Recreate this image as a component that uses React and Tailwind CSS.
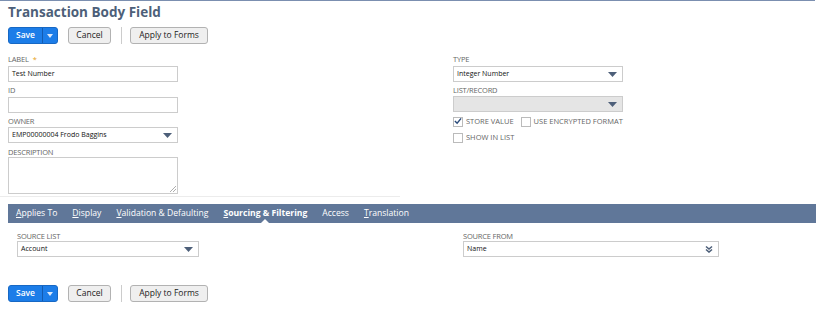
import React from "react";

const font = { fontFamily: '"Open Sans", "Liberation Sans", sans-serif' };

function Caret({ double }) {
  if (double) {
    return (
      <svg width="8" height="8" viewBox="0 0 8 8" className="text-[#4d5f79]">
        <path d="M1 1.5 L4 4 L7 1.5" stroke="currentColor" strokeWidth="1.6" fill="none" />
        <path d="M1 4.5 L4 7 L7 4.5" stroke="currentColor" strokeWidth="1.6" fill="none" />
      </svg>
    );
  }
  return (
    <svg width="9" height="5" viewBox="0 0 9 5" className="text-[#4d5f79]">
      <path d="M0 0 H9 L4.5 5 Z" fill="currentColor" />
    </svg>
  );
}

function Label({ children, req }) {
  return (
    <div className="h-[9px] text-[7.5px] leading-[9px] uppercase text-[#666] tracking-tight">
      {children}
      {req && <span className="ml-1 text-[#e6a118]">*</span>}
    </div>
  );
}

function TextBox({ value, w = "w-[170px]" }) {
  return (
    <div className={`${w} h-[16px] border border-[#ccc] bg-white px-[3px] text-[7px] leading-[14px] text-[#111]`}>
      {value}
    </div>
  );
}

function Select({ value, w = "w-[170px]", disabled, double }) {
  return (
    <div
      className={`${w} h-[16px] border border-[#ccc] ${disabled ? "bg-[#e5e5e5]" : "bg-white"} px-[3px] flex items-center justify-between text-[7px] text-[#111]`}
    >
      <span>{value}</span>
      <span className="pr-[2px] flex items-center">
        <Caret double={double} />
      </span>
    </div>
  );
}

function Buttons() {
  return (
    <div className="flex items-center h-[17px]">
      <div className="flex h-[17px] rounded-[3px] bg-[#1c7de8] border border-[#1768c4] text-white text-[8.5px]">
        <div className="w-[33px] flex items-center justify-center font-semibold">Save</div>
        <div className="w-[15px] border-l border-[#145bb0] flex items-center justify-center">
          <svg width="6" height="4" viewBox="0 0 6 4"><path d="M0 0H6L3 4Z" fill="#dbe9fb" /></svg>
        </div>
      </div>
      <div className="ml-[10px] h-[17px] w-[43px] rounded-[3px] border border-[#b2b2b2] bg-[#efefef] text-[8.5px] text-[#222] flex items-center justify-center">
        Cancel
      </div>
      <div className="ml-[10px] mr-[8px] w-px h-[17px] bg-[#ccc]" />
      <div className="h-[17px] w-[78px] rounded-[3px] border border-[#b2b2b2] bg-[#efefef] text-[8.5px] text-[#222] flex items-center justify-center">
        Apply to Forms
      </div>
    </div>
  );
}

function Check({ checked }) {
  return (
    <div className="w-[10px] h-[10px] border border-[#bbb] bg-white flex items-center justify-center">
      {checked && (
        <svg width="9" height="8" viewBox="0 0 9 8" className="-mt-[2px]">
          <path d="M1 4 L3.5 6.5 L8 1" stroke="#2a4a7a" strokeWidth="1.6" fill="none" />
        </svg>
      )}
    </div>
  );
}

function Tab({ first, rest, active }) {
  return (
    <div className={`relative h-full flex items-center text-[8.6px] text-white ${active ? "font-bold" : ""}`}>
      <span>
        <span className="underline underline-offset-1">{first}</span>
        {rest}
      </span>
      {active && (
        <div className="absolute bottom-0 left-1/2 -translate-x-1/2 w-0 h-0 border-l-[4px] border-r-[4px] border-b-[4px] border-l-transparent border-r-transparent border-b-white" />
      )}
    </div>
  );
}

export default function App() {
  return (
    <div style={font} className="w-[816px] h-[322px] bg-white overflow-hidden">
      <div className="h-px w-[815px] bg-[#7b8fb0]" />
      <div className="px-[8px]">
        <h1 className="h-[22px] text-[13.5px] leading-[22px] font-bold text-[#4d5f79]">
          Transaction Body Field
        </h1>
        <div className="mt-[4px]">
          <Buttons />
        </div>

        <div className="mt-[11px] flex">
          <div className="w-[445px]">
            <Label req>Label</Label>
            <div className="mt-[2px]"><TextBox value="Test Number" /></div>
            <div className="mt-[4px]"><Label>ID</Label></div>
            <div className="mt-[2px]"><TextBox value="" /></div>
            <div className="mt-[4px]"><Label>Owner</Label></div>
            <div className="mt-[1px]"><Select value="EMP00000004 Frodo Baggins" /></div>
            <div className="mt-[5px]"><Label>Description</Label></div>
            <div className="relative w-[170px] h-[37px] border border-[#ccc] bg-white">
              <svg width="6" height="6" viewBox="0 0 6 6" className="absolute right-[1px] bottom-[1px]">
                <path d="M6 0 L0 6 M6 3 L3 6" stroke="#999" strokeWidth="0.8" />
              </svg>
            </div>
          </div>
          <div>
            <Label>Type</Label>
            <div className="mt-[2px]"><Select value="Integer Number" /></div>
            <div className="mt-[4px]"><Label>List/Record</Label></div>
            <div className="mt-[1px]"><Select value="" disabled /></div>
            <div className="mt-[4px] flex items-center gap-[3px] text-[7.5px] uppercase text-[#666]">
              <Check checked />
              <span>Store Value</span>
              <div className="ml-[4px]"><Check /></div>
              <span>Use Encrypted Format</span>
            </div>
            <div className="mt-[5px] flex items-center gap-[3px] text-[7.5px] uppercase text-[#666]">
              <Check />
              <span>Show In List</span>
            </div>
          </div>
        </div>
      </div>

      <div className="mt-[2px] h-px bg-[#ececec] w-[400px]" />
      <div className="mt-[7px] ml-[8px] h-[19px] bg-[#607799] flex items-center gap-[15px] pl-[8px]">
        <Tab first="A" rest="pplies To" />
        <Tab first="D" rest="isplay" />
        <Tab first="V" rest="alidation & Defaulting" />
        <Tab first="S" rest="ourcing & Filtering" active />
        <Tab first="" rest="Access" />
        <Tab first="T" rest="ranslation" />
      </div>

      <div className="mt-[9px] pl-[17px] flex">
        <div className="w-[446px]">
          <Label>Source List</Label>
          <div><Select value="Account" w="w-[182px]" /></div>
        </div>
        <div>
          <Label>Source From</Label>
          <div><Select value="Name" w="w-[256px]" double /></div>
        </div>
      </div>

      <div className="mt-[28px] px-[8px]">
        <Buttons />
      </div>
    </div>
  );
}
